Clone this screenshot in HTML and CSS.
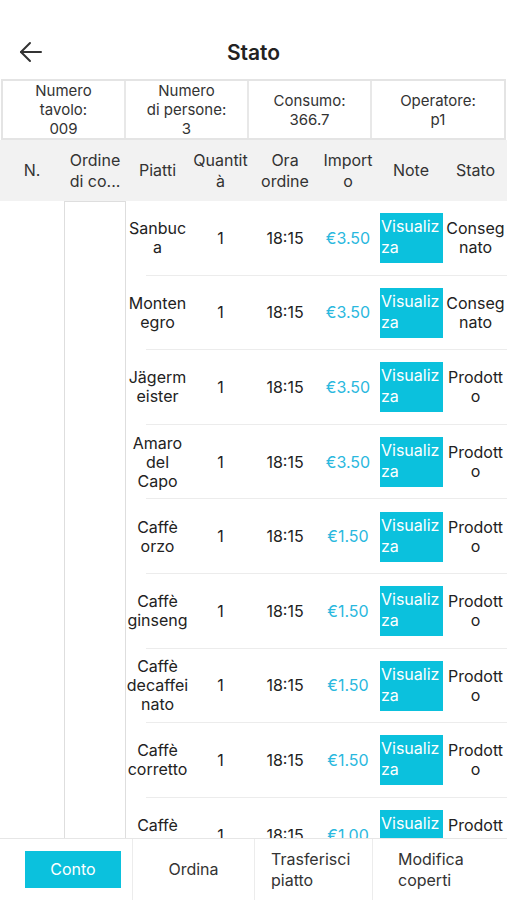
FILE: index.html
```html
<!DOCTYPE html>
<html lang="it">
<head>
	<meta charset="UTF-8">
	<meta name="viewport" content="width=device-width, initial-scale=1.0">
	<title>Stato</title>
	<link rel="stylesheet" href="styles.css">
</head>
<body>
	<div class="screen">
		<header class="topbar">
			<button class="back" aria-label="Indietro">
				<svg width="24" height="22" viewBox="0 0 24 22" fill="none" stroke="#333" stroke-width="2" stroke-linecap="round" stroke-linejoin="round">
					<path d="M22 11H2"/>
					<path d="M11 2L2 11l9 9"/>
				</svg>
			</button>
			<h1>Stato</h1>
			<span></span>
		</header>

		<div class="summary">
			<div class="summary-cell">Numero<br>tavolo:<br>009</div>
			<div class="summary-cell">Numero<br>di persone:<br>3</div>
			<div class="summary-cell">Consumo:<br>366.7</div>
			<div class="summary-cell">Operatore:<br>p1</div>
		</div>

		<div class="thead">
			<div>N.</div>
			<div>Ordine di co...</div>
			<div>Piatti</div>
			<div>Quantità</div>
			<div>Ora ordine</div>
			<div>Importo</div>
			<div>Note</div>
			<div>Stato</div>
		</div>

		<div class="tbody">
			<div class="col-n"></div>
			<div class="col-order"></div>
			<div class="rows">
				<div class="row">
					<div>Sanbuca</div><div>1</div><div>18:15</div><div class="price">€3.50</div>
					<div><span class="note-btn">Visualizza</span></div><div>Consegnato</div>
				</div>
				<div class="row">
					<div>Montenegro</div><div>1</div><div>18:15</div><div class="price">€3.50</div>
					<div><span class="note-btn">Visualizza</span></div><div>Consegnato</div>
				</div>
				<div class="row">
					<div>Jägermeister</div><div>1</div><div>18:15</div><div class="price">€3.50</div>
					<div><span class="note-btn">Visualizza</span></div><div>Prodotto</div>
				</div>
				<div class="row">
					<div>Amaro del Capo</div><div>1</div><div>18:15</div><div class="price">€3.50</div>
					<div><span class="note-btn">Visualizza</span></div><div>Prodotto</div>
				</div>
				<div class="row">
					<div>Caffè orzo</div><div>1</div><div>18:15</div><div class="price">€1.50</div>
					<div><span class="note-btn">Visualizza</span></div><div>Prodotto</div>
				</div>
				<div class="row">
					<div>Caffè ginseng</div><div>1</div><div>18:15</div><div class="price">€1.50</div>
					<div><span class="note-btn">Visualizza</span></div><div>Prodotto</div>
				</div>
				<div class="row">
					<div>Caffè decaffeinato</div><div>1</div><div>18:15</div><div class="price">€1.50</div>
					<div><span class="note-btn">Visualizza</span></div><div>Prodotto</div>
				</div>
				<div class="row">
					<div>Caffè corretto</div><div>1</div><div>18:15</div><div class="price">€1.50</div>
					<div><span class="note-btn">Visualizza</span></div><div>Prodotto</div>
				</div>
				<div class="row">
					<div>Caffè latte</div><div>1</div><div>18:15</div><div class="price">€1.00</div>
					<div><span class="note-btn">Visualizza</span></div><div>Prodotto</div>
				</div>
			</div>
		</div>

		<nav class="tabbar">
			<div class="tab"><span class="tab-primary">Conto</span></div>
			<div class="tab tab-center">Ordina</div>
			<div class="tab tab-left">Trasferisci piatto</div>
			<div class="tab tab-left tab-last">Modifica coperti</div>
		</nav>
	</div>
</body>
</html>
```

FILE: styles.css
```css
* {
	box-sizing: border-box;
	margin: 0;
	padding: 0;
}

body {
	font-family: Inter, "Noto Sans", sans-serif;
	font-size: 15px;
	color: #222;
	background: #fff;
}

.screen {
	height: 900px;
	display: flex;
	flex-direction: column;
	overflow: hidden;
}

/* Top bar */
.topbar {
	height: 79px;
	padding-top: 25px;
	display: grid;
	grid-template-columns: 60px 1fr 60px;
	align-items: center;
	flex-shrink: 0;
}

.back {
	border: none;
	background: none;
	margin-left: 19px;
	width: 24px;
	height: 22px;
	display: flex;
}

.topbar h1 {
	text-align: center;
	font-size: 21px;
	font-weight: 600;
	color: #222;
}

/* Summary box */
.summary {
	display: grid;
	grid-template-columns: 123px 123px 123px 1fr;
	height: 61px;
	margin: 0 1px;
	border: 2px solid #e4e4e4;
	flex-shrink: 0;
}

.summary-cell {
	display: flex;
	align-items: center;
	justify-content: center;
	text-align: center;
	padding: 0 8px;
	line-height: 19px;
	color: #333;
	border-right: 2px solid #e8e8e8;
}

.summary-cell:last-child {
	border-right: none;
}

/* Table header */
.thead {
	display: grid;
	grid-template-columns: 64px 62px 63px 63px 66px 60px 66px 63px;
	height: 61px;
	align-items: center;
	background: #f2f2f2;
	text-align: center;
	line-height: 21px;
	font-size: 16px;
	color: #333;
	overflow-wrap: anywhere;
	flex-shrink: 0;
}

.thead div {
	padding: 0 2px;
}

/* Table body */
.tbody {
	flex: 1;
	display: flex;
	overflow: hidden;
}

.col-n {
	width: 64px;
	flex-shrink: 0;
}

.col-order {
	width: 62px;
	flex-shrink: 0;
	border: 1px solid #dedede;
	border-bottom: none;
}

.rows {
	flex: 1;
}

.row {
	position: relative;
	display: grid;
	grid-template-columns: 63px 63px 66px 60px 66px 63px;
	height: 74.6px;
	align-items: center;
	text-align: center;
	line-height: 19px;
	font-size: 16px;
	color: #222;
	overflow-wrap: anywhere;
}

.row::after {
	content: "";
	position: absolute;
	left: 20px;
	right: 0;
	bottom: 0;
	height: 1px;
	background: #ececec;
}

.price {
	color: #2ab8de;
}

.note-btn {
	display: block;
	width: 63px;
	height: 50px;
	margin-left: 2px;
	padding: 3px 0 0 1px;
	background: #0bc1dd;
	color: #fff;
	text-align: left;
	line-height: 21px;
	font-size: 16px;
	word-break: break-all;
}

/* Bottom bar */
.tabbar {
	height: 62px;
	flex-shrink: 0;
	display: grid;
	grid-template-columns: 133px 122px 118px 1fr;
	border-top: 1px solid #e6e6e6;
	background: #fff;
	font-size: 16px;
	color: #333;
	line-height: 21px;
}

.tab {
	display: flex;
	align-items: center;
	border-right: 1px solid #ececec;
}

.tab-center {
	justify-content: center;
}

.tab-left {
	padding-left: 16px;
	padding-right: 30px;
}

.tab-last {
	border-right: none;
	padding-left: 25px;
}

.tab-primary {
	margin-left: 25px;
	width: 96px;
	height: 37px;
	display: flex;
	align-items: center;
	justify-content: center;
	background: #0bc1dd;
	color: #fff;
}
```
